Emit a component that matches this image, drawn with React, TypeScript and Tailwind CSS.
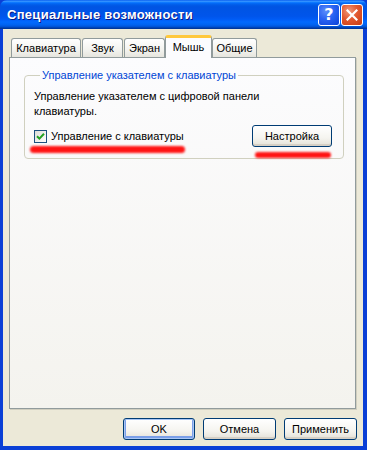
import React from 'react';

function XpButton({ label, def = false, className = '' }: { label: string; def?: boolean; className?: string }) {
  return (
    <div
      className={
        'flex items-center justify-center h-[22px] rounded-[3px] border border-[#003C74] bg-[linear-gradient(180deg,#FFFFFF_0%,#F5F4EF_60%,#E3E1D7_100%)] ' +
        (def ? 'shadow-[inset_0_0_0_1px_#A9C6F4,inset_0_-1px_0_2px_#7B9FE8] ' : 'shadow-[inset_0_-2px_0_#D6D0C5] ') +
        className
      }
    >
      {label}
    </div>
  );
}

export default function App() {
  return (
    <div className="relative w-[367px] h-[450px] flex flex-col bg-[#0A3FD6] font-['Liberation_Sans',Arial,sans-serif] text-[11px] text-black">
      {/* Title bar */}
      <div className="h-[29px] shrink-0 rounded-t-[7px] flex items-center pl-[7px] pr-[4px] bg-[linear-gradient(180deg,#0058EE_0%,#3A93FF_4%,#288EFF_6%,#127DFF_8%,#036FFC_10%,#0262EE_14%,#0057E5_20%,#0054E3_24%,#0055EB_56%,#005BF5_66%,#026AFE_76%,#0062EF_86%,#0052D6_92%,#0040AB_96%,#003092_100%)]">
        <span className="text-white font-bold text-[13px] tracking-[0.3px] [text-shadow:1px_1px_0_#0A1883] pt-[1px]">
          Специальные возможности
        </span>
        <div className="ml-auto flex gap-[1px] pt-[1px]">
          <div className="w-[22px] h-[22px] rounded-[3px] border border-white flex items-center justify-center bg-[radial-gradient(circle_at_35%_30%,#5C8FFB_0%,#2A62F2_45%,#0B43D8_100%)]">
            <span className="text-white font-bold text-[16px] leading-none font-['DejaVu_Sans',sans-serif]">?</span>
          </div>
          <div className="w-[22px] h-[22px] rounded-[3px] border border-white flex items-center justify-center bg-[radial-gradient(circle_at_35%_30%,#F0987A_0%,#E2582F_45%,#C63C14_100%)]">
            <svg width="12" height="12" viewBox="0 0 12 12">
              <path d="M1.5 1.5 L10.5 10.5 M10.5 1.5 L1.5 10.5" stroke="#fff" strokeWidth="2.2" strokeLinecap="square" />
            </svg>
          </div>
        </div>
      </div>

      {/* Client area */}
      <div className="flex-1 ml-[3px] mr-[4px] mb-[4px] bg-[#ECE9D8] flex flex-col pt-[6px]">
        {/* Tabs */}
        <div className="flex items-end h-[22px] pl-[8px]">
          <div className="w-[70px] h-[19px] flex items-center justify-center border border-b-0 border-[#919B9C] rounded-t-[3px] bg-[linear-gradient(180deg,#FFFFFF_0%,#F3F3EF_60%,#E6E5DE_100%)]">Клавиатура</div>
          <div className="ml-[1px] w-[41px] h-[19px] flex items-center justify-center border border-b-0 border-[#919B9C] rounded-t-[3px] bg-[linear-gradient(180deg,#FFFFFF_0%,#F3F3EF_60%,#E6E5DE_100%)]">Звук</div>
          <div className="ml-[1px] w-[41px] h-[19px] flex items-center justify-center border border-b-0 border-[#919B9C] rounded-t-[3px] bg-[linear-gradient(180deg,#FFFFFF_0%,#F3F3EF_60%,#E6E5DE_100%)]">Экран</div>
          <div className="relative z-10 -mb-[1px] w-[47px] h-[23px] flex items-center justify-center border border-b-0 border-[#919B9C] rounded-t-[3px] bg-[#FCFCFE] border-t-[3px] border-t-[#FFC83C] pb-[1px]">Мышь</div>
          <div className="w-[45px] h-[19px] flex items-center justify-center border border-b-0 border-[#919B9C] rounded-t-[3px] bg-[linear-gradient(180deg,#FFFFFF_0%,#F3F3EF_60%,#E6E5DE_100%)]">Общие</div>
        </div>

        {/* Tab page */}
        <div className="ml-[6px] mr-[7px] h-[352px] border border-[#919B9C] shadow-[1px_1px_0_#D0CEBF] bg-[linear-gradient(180deg,#FCFCFE_0%,#F4F3EE_100%)] flex flex-col">
          <fieldset className="mt-[10px] ml-[14px] w-[320px] border border-[#D0D0BF] rounded-[4px] pl-[9px] pr-[11px] pb-[12px] pt-[7px]">
            <legend className="ml-[6px] px-[2px] leading-[14px] text-[#0046D5]">Управление указателем с клавиатуры</legend>
            <div className="leading-[15px]">
              Управление указателем с цифровой панели
              <br />
              клавиатуры.
            </div>
            <div className="mt-[7px] flex items-center h-[20px]">
              <div className="w-[13px] h-[13px] border border-[#1C5180] bg-[linear-gradient(135deg,#DCDCD7_0%,#FFFFFF_100%)] flex items-center justify-center">
                <svg width="9" height="9" viewBox="0 0 9 9">
                  <path d="M1 4.2 L3.4 6.6 L8 1.8" fill="none" stroke="#21A121" strokeWidth="2" />
                </svg>
              </div>
              <span className="ml-[4px]">Управление с клавиатуры</span>
              <XpButton label="Настройка" className="ml-auto w-[80px] h-[20px]" />
            </div>
          </fieldset>
        </div>

        {/* Dialog buttons */}
        <div className="mt-[9px] flex justify-end gap-[8px] pr-[6px]">
          <XpButton label="OK" def className="w-[72px]" />
          <XpButton label="Отмена" className="w-[73px]" />
          <XpButton label="Применить" className="w-[73px]" />
        </div>
      </div>

      {/* Red highlight strokes (annotation overlay) */}
      <div className="absolute left-[30px] top-[146px] w-[155px] h-[7px] rounded-full bg-[#FF1414] blur-[1.2px]" />
      <div className="absolute left-[255px] top-[152px] w-[76px] h-[6px] rounded-full bg-[#FF1414] blur-[1.2px]" />
    </div>
  );
}
